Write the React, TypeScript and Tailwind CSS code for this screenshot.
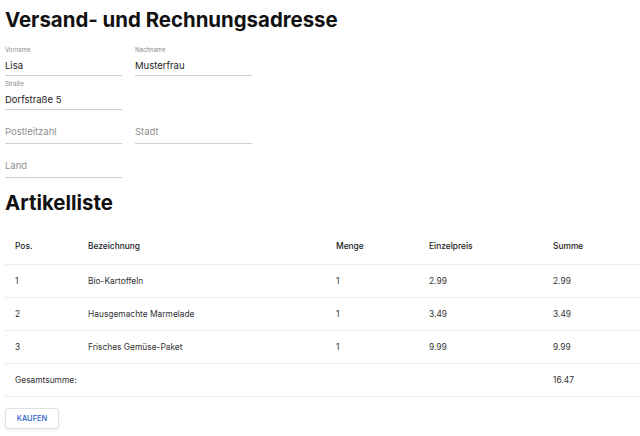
import React from "react";

const Field = ({ label, value, placeholder }: { label?: string; value?: string; placeholder?: string }) => (
  <div className="w-[117px] h-[34px] flex flex-col justify-end border-b border-[#cfcfcf]">
    {label && <div className="text-[6px] leading-[8px] text-[#8a8a8a] mb-[6px]">{label}</div>}
    {value ? (
      <div className="text-[9.5px] leading-[12px] text-[#222] pb-[3px]">{value}</div>
    ) : (
      <div className="text-[9.5px] leading-[12px] text-[#8f8f8f] pb-[5px]">{placeholder}</div>
    )}
  </div>
);

const rows = [
  ["1", "Bio-Kartoffeln", "1", "2.99", "2.99"],
  ["2", "Hausgemachte Marmelade", "1", "3.49", "3.49"],
  ["3", "Frisches Gemüse-Paket", "1", "9.99", "9.99"],
];

const grid = "grid grid-cols-[73px_248px_93px_124px_1fr] pl-[10px] items-center border-b border-[#ececec]";

export default function App() {
  return (
    <div className="w-[640px] h-[436px] overflow-hidden bg-white pl-[5px] font-['Inter',sans-serif]">
      <h1 className="text-[20.4px] leading-[24px] font-bold text-[#111] mt-[8px]">Versand- und Rechnungsadresse</h1>
      <div className="flex flex-col mt-[10px]">
        <div className="flex gap-[13px]">
          <Field label="Vorname" value="Lisa" />
          <Field label="Nachname" value="Musterfrau" />
        </div>
        <Field label="Straße" value="Dorfstraße 5" />
        <div className="flex gap-[13px]">
          <Field placeholder="Postleitzahl" />
          <Field placeholder="Stadt" />
        </div>
        <Field placeholder="Land" />
      </div>
      <h2 className="text-[20.4px] leading-[24px] font-bold text-[#111] mt-[13px]">Artikelliste</h2>
      <div className="mt-[14px] text-[8.4px] text-[#333]">
        <div className={`${grid} h-[36px] font-medium text-[#222]`}>
          <div>Pos.</div>
          <div>Bezeichnung</div>
          <div>Menge</div>
          <div>Einzelpreis</div>
          <div>Summe</div>
        </div>
        {rows.map((r) => (
          <div key={r[0]} className={`${grid} h-[33px]`}>
            {r.map((c, i) => (
              <div key={i}>{c}</div>
            ))}
          </div>
        ))}
        <div className={`${grid} h-[33px]`}>
          <div className="col-span-4">Gesamtsumme:</div>
          <div>16.47</div>
        </div>
      </div>
      <button className="mt-[11px] w-[54px] h-[21px] border border-[#e0e0e0] rounded-[3px] shadow-[0_1px_2px_rgba(0,0,0,0.08)] text-[7.5px] font-medium text-[#2a62c9] flex items-center justify-center">
        KAUFEN
      </button>
    </div>
  );
}
